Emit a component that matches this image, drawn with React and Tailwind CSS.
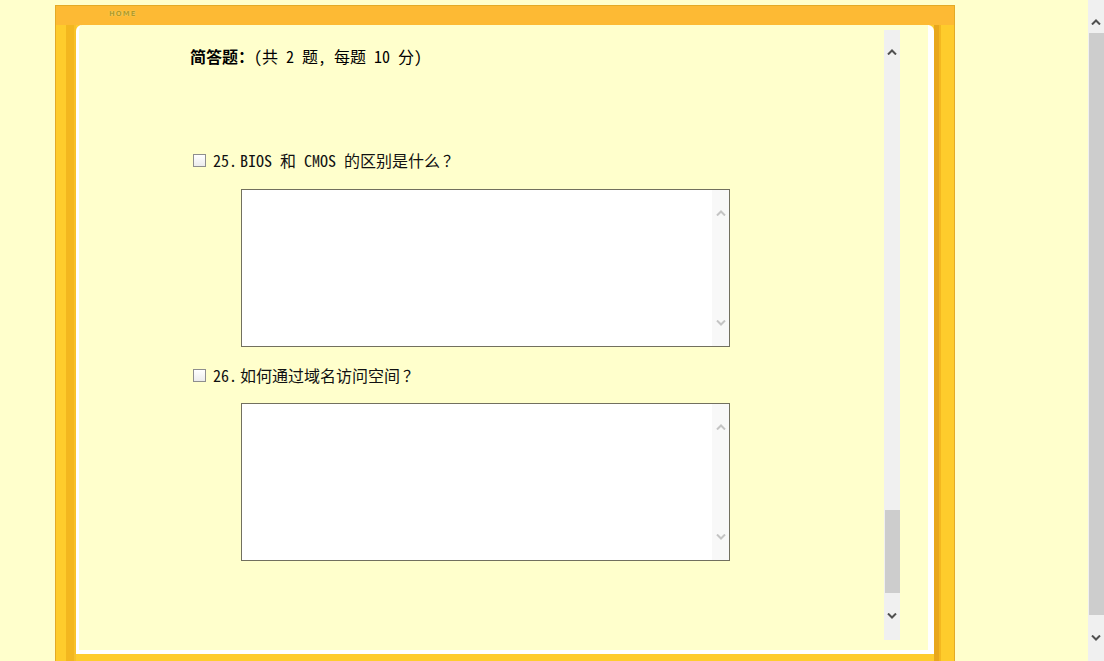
import React from "react";

const monoCjk =
  "font-['Noto_Sans_Mono_CJK_SC','Liberation_Mono','Noto_Sans_CJK_SC',monospace]";

function Chevron({ up, className }) {
  return (
    <svg width="10" height="6" viewBox="0 0 10 6" className={className}>
      <polyline
        points={up ? "1,5.5 5,1.5 9,5.5" : "1,0.5 5,4.5 9,0.5"}
        fill="none"
        stroke="currentColor"
        strokeWidth="2"
      />
    </svg>
  );
}

function CheckBox() {
  return (
    <div className="w-[13px] h-[13px] border border-[#8e8e8e] bg-gradient-to-b from-white to-[#ececec]" />
  );
}

function AnswerBox() {
  return (
    <div className="ml-[162px] w-[489px] h-[158px] border border-[#72705f] bg-white flex justify-end">
      <div className="w-[17px] h-full bg-[#f8f8f8] flex flex-col items-center justify-between py-[20px] text-[#c4c4c4]">
        <Chevron up />
        <Chevron />
      </div>
    </div>
  );
}

function Question({ no, text }) {
  // last char is the full-width question mark, centred in its cell like the original font
  return (
    <div className={`flex items-center h-[20px] ml-[114px] text-[16px] text-[#111] ${monoCjk}`}>
      <CheckBox />
      <span className="ml-[7px] w-[27px]">{no}.</span>
      <span>{text}</span>
      <span className="ml-[3px]">？</span>
    </div>
  );
}

export default function App() {
  return (
    <div className="w-[1104px] h-[661px] bg-[#ffffcc] flex overflow-hidden">
      <div className="w-[1088px] h-full">
        <div className="ml-[55px] mt-[5px] w-[900px] h-[700px] border-x border-t border-[#e3aa26] flex flex-col">
          {/* top bar */}
          <div className="h-[19px] bg-[#fdba34] flex items-center">
            <span className="ml-[53px] mt-[-2px] text-[7px] leading-none font-bold tracking-[1px] text-[#b49a22] font-['DejaVu_Sans',sans-serif] [text-shadow:0_0_1px_#fff2a0]">
              HOME
            </span>
          </div>

          <div className="flex flex-1 bg-[#fecc2c]">
            {/* left frame strip */}
            <div className="w-[20px] flex">
              <div className="w-[10px] bg-[#fecc2c]" />
              <div className="w-[8px] bg-[#f3b71f]" />
              <div className="w-[2px] bg-[#f8c22a]" />
            </div>

            {/* content panel */}
            <div className="w-[858px] h-[629px] bg-[#ffffcc] border-l-[3px] border-r-[6px] border-b-[4px] border-white rounded-t-[6px] flex">
              <div className="w-[805px] flex flex-col">
                <div className="mt-[21px] ml-[111px] h-[20px] flex items-center text-[16px] text-black">
                  <span className="font-bold font-['Noto_Sans_CJK_SC',sans-serif]">简答题：</span>
                  <span className={monoCjk}>(共 2 题, 每题 10 分)</span>
                </div>

                <div className="mt-[84px]">
                  <Question no="25" text="BIOS 和 CMOS 的区别是什么" />
                </div>
                <div className="mt-[19px]">
                  <AnswerBox />
                </div>

                <div className="mt-[18px]">
                  <Question no="26" text="如何通过域名访问空间" />
                </div>
                <div className="mt-[18px]">
                  <AnswerBox />
                </div>
              </div>

              {/* inner scrollbar */}
              <div className="mt-[5px] w-[16px] h-[610px] bg-[#f0f0f0] flex flex-col items-center">
                <div className="pt-[19px] text-[#505050]">
                  <Chevron up />
                </div>
                <div className="mt-[455px] w-[15px] h-[83px] bg-[#cdcdcd]" />
                <div className="mt-[20px] text-[#505050]">
                  <Chevron />
                </div>
              </div>
            </div>

            {/* right frame strip */}
            <div className="w-[20px] flex">
              <div className="w-[5px] bg-[#e8a71c]" />
              <div className="w-[2px] bg-[#f4b820]" />
              <div className="w-[13px] bg-[#fecc2c]" />
            </div>
          </div>
        </div>
      </div>

      {/* page scrollbar */}
      <div className="w-[16px] h-full bg-[#f0f0f0] flex flex-col items-center">
        <div className="h-[33px] pt-[19px] text-[#505050]">
          <Chevron up />
        </div>
        <div className="w-[15px] h-[582px] bg-[#cdcdcd]" />
        <div className="pt-[20px] text-[#505050]">
          <Chevron />
        </div>
      </div>
    </div>
  );
}
